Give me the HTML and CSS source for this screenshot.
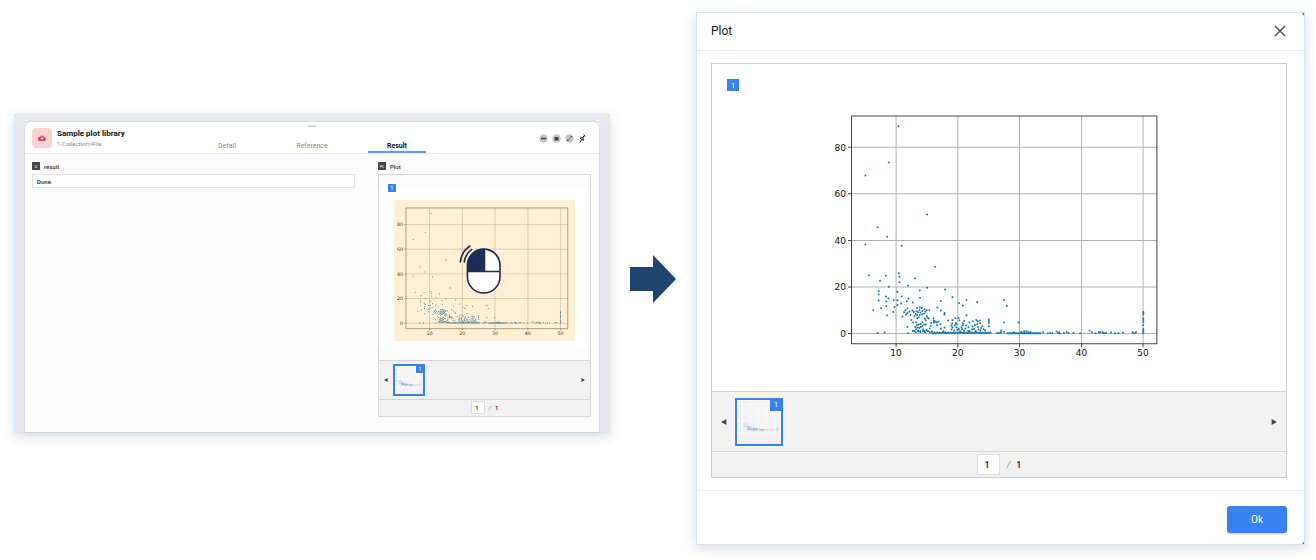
FILE: index.html
```
<!DOCTYPE html>
<html lang="en">
<head>
<meta charset="utf-8">
<meta name="viewport" content="width=device-width, initial-scale=1">
<title>Sample plot library</title>
<link rel="stylesheet" href="styles.css">
</head>
<body>
<main class="scene">
  <section class="app">
    <div class="panel">
      <header class="panel-head">
        <span class="handle"></span>
        <div class="brand">
          <span class="logo">
            <svg viewBox="0 0 24 18"><path fill="#e2464f" d="M19 7a7.500 7.500 0 0 0-14-1A6 6 0 0 0 6 18h12.500A5.500 5.500 0 0 0 19 7z"/><path fill="#f9d0d1" d="M12 15l-5-6h3V5h4v4h3z"/></svg>
          </span>
          <div><h1>Sample plot library</h1><p>1-Collection&gt;File</p></div>
        </div>
        <nav class="tabs">
          <a href="#detail">Detail</a><a href="#reference">Reference</a><a href="#result" class="active" aria-current="page">Result</a>
        </nav>
        <div class="actions">
          <button aria-label="Minimize"><svg viewBox="0 0 18 18"><circle cx="9" cy="9" r="8.500" fill="#c4c4c4"/><path d="M4 9h10" stroke="#444" stroke-width="3"/></svg></button>
          <button aria-label="Restore"><svg viewBox="0 0 18 18"><circle cx="9" cy="9" r="8.500" fill="#c4c4c4"/><path fill="#444" d="M5 6h8v7H5z"/></svg></button>
          <button aria-label="Expand"><svg viewBox="0 0 18 18"><circle cx="9" cy="9" r="8.500" fill="#c4c4c4"/><path d="M10 4h4v4zM4 10v4h4z" fill="#555"/><path d="M5 13l8-8" stroke="#666" stroke-width="1.500"/></svg></button>
          <button aria-label="Pin"><svg viewBox="0 0 18 18"><path fill="none" stroke="#333" stroke-width="2" d="M11 1l4 4M13 3l-3 5 1 5-7-5 5-1 4-4M7.500 10.500L4 17"/></svg></button>
        </div>
      </header>
      <div class="panel-body">
        <div>
          <label class="field" for="result-value"><span class="tag">S</span>result</label>
          <input id="result-value" class="value" value="Done" readonly>
        </div>
        <div>
          <h2 class="field"><span class="tag">PL</span>Plot</h2>
          <div class="viewer small">
            <div class="stage">
              <span class="badge">1</span>
              <div class="canvas">
                <div class="shot">
                  <svg class="plot" viewBox="829 101 342 265" role="img" aria-label="Scatter plot"><use href="#figure"/></svg>
                  <div class="hint">
                    <svg class="mouse" viewBox="270 165 130 152" aria-hidden="true"><rect x="295" y="179" width="99" height="133" rx="49.500" fill="#fff"/><path fill="#1d2e56" d="M347 179v69h-52v-20a50 49 0 0 1 52-49z"/><g fill="none" stroke="#1d2e56" stroke-width="5"><rect x="295.500" y="179.500" width="98.500" height="132.500" rx="49"/><path d="M295 247h99M347 180v67"/><path stroke-linecap="round" d="M274 218q4-32 29-48M286 218q3-24 22-37"/></g></svg>
                  </div>
                </div>
              </div>
            </div>
            <div class="strip">
              <button class="nav" aria-label="Previous"><svg viewBox="0 0 10 10"><path d="M9 0v10L0 5z"/></svg></button>
              <button class="thumb" aria-label="Plot 1"><svg class="plot" viewBox="829 101 342 265"><use href="#figure"/></svg><span class="badge">1</span></button>
              <button class="nav next" aria-label="Next"><svg viewBox="0 0 10 10"><path d="M1 0v10L10 5z"/></svg></button>
            </div>
            <div class="pager"><input aria-label="Page" value="1"><i>/</i><span>1</span></div>
          </div>
        </div>
      </div>
    </div>
  </section>

  <svg class="arrow" viewBox="0 0 46 48" aria-hidden="true"><path fill="#1e456e" d="M0 12h23V0l23 24-23 24V36H0z"/></svg>

  <section class="dialog" role="dialog" aria-labelledby="dialog-title">
    <header class="dialog-head">
      <h2 id="dialog-title">Plot</h2>
      <button class="close" aria-label="Close"><svg viewBox="0 0 12 12"><path d="M1 1l10 10M11 1L1 11" stroke="#555" stroke-width="1.500"/></svg></button>
    </header>
    <div class="dialog-body">
      <div class="viewer">
        <div class="stage">
          <span class="badge">1</span>
          <svg class="plot" viewBox="827 100 344 266" role="img" aria-label="Scatter plot">
            <g id="figure">
              <rect x="829" y="101" width="342" height="265" fill="#fff"/>
              <path class="grid" d="M896 116V344M957.700 116V344M1019.300 116V344M1081.300 116V344M1142.700 116V344M851 147.300H1157M851 193.700H1157M851 240.300H1157M851 286.700H1157M851 333.300H1157"/>
              <path id="points" class="points" transform="translate(825 230) scale(.3333)"/>
              <path class="frame" d="M851.500 116H1156.500V343.500H851.500ZM896 344v3M957.700 344v3M1019.300 344v3M1081.300 344v3M1142.700 344v3M848 147.300h3M848 193.700h3M848 240.300h3M848 286.700h3M848 333.300h3"/>
              <g class="tick" text-anchor="middle">
                <text x="896" y="356">10</text><text x="957.700" y="356">20</text><text x="1019.300" y="356">30</text><text x="1081.300" y="356">40</text><text x="1142.700" y="356">50</text>
              </g>
              <g class="tick" text-anchor="end">
                <text x="846" y="150.500">80</text><text x="846" y="197">60</text><text x="846" y="243.500">40</text><text x="846" y="290">20</text><text x="846" y="336.500">0</text>
              </g>
            </g>
          </svg>
        </div>
        <div class="strip">
          <button class="nav" aria-label="Previous"><svg viewBox="0 0 10 10"><path d="M9 0v10L0 5z"/></svg></button>
          <button class="thumb" aria-label="Plot 1"><svg class="plot" viewBox="829 101 342 265"><use href="#figure"/></svg><span class="badge">1</span></button>
          <button class="nav next" aria-label="Next"><svg viewBox="0 0 10 10"><path d="M1 0v10L10 5z"/></svg></button>
        </div>
        <div class="pager"><input aria-label="Page" value="1"><i>/</i><span>1</span></div>
      </div>
    </div>
    <footer class="dialog-foot"><button class="ok">Ok</button></footer>
  </section>
</main>
<script src="plot.js"></script>
</body>
</html>
```
FILE: plot.js
```
// Scatter samples, as "x,y" pairs in thirds of a figure unit.
const samples = `
220,-311 191,-203 121,-164 306,-47 158,-9 186,20 121,43 230,47 330,110 132,135 182,137 165,152
221,129 223,140 223,156 191,170 249,166 270,145 306,173 284,181 360,178 382,201 285,203 347,212
161,183 161,193 161,211 183,199 190,204 184,214 184,227 168,234 145,240 186,256 217,185 230,199
206,210 217,210 208,230 205,245 217,224 228,220 245,213 250,205 263,217 247,235 402,218 413,226
424,209 456,215 537,209 545,227 424,255 337,232 347,241 358,248 358,253 313,240 232,259 237,246
243,253 247,248 241,240 253,244 256,254 262,241 266,245 268,258 272,251 274,243 276,233 284,232
283,240 290,233 298,237 301,244 305,240 292,242 286,247 279,246 276,255 281,261 284,254 291,252
297,250 305,257 307,262 299,265 302,270 311,265 325,264 326,271 259,269 264,277 276,264 273,276
275,285 281,283 287,281 277,292 270,290 283,293 287,290 292,276 292,287 297,283 302,283 247,290
263,302 268,302 273,297 279,301 285,302 294,297 298,302 304,299 310,303 314,295 317,287 318,278
326,277 330,274 335,276 336,284 340,274 346,282 347,295 355,303 358,292 369,271 382,269 391,264
400,263 403,270 392,278 381,280 379,286 382,292 389,286 394,282 394,292 401,296 409,291 413,279
417,272 413,285 423,286 430,291 429,302 421,295 433,277 443,273 453,269 457,273 464,271 465,279
456,282 458,290 449,284 442,289 447,296 441,297 434,302 460,298 468,293 472,288 475,297 480,300
491,268 491,273 491,278 491,288 379,298 387,301 397,299 405,303 411,296 417,301 452,302 466,301
158,308 179,307 249,309 537,277 580,277 528,301 793,301 800,306 528,306 537,305
954,245 954,250 954,253 954,265 954,270 954,275 954,284 954,296 954,301 954,305 954,309
515,309 519,308 524,309 546,309 566,306 588,305 592,308 597,303 600,308 604,303 610,306 613,309
616,306 625,309 633,308 641,309 654,306 668,309 675,308 682,309 694,304 698,309 702,306 704,310 716,308 724,306 730,308
745,308 765,309 811,309 820,306 825,306 832,306 836,308 842,308 857,306 869,309 880,309 893,307 922,306 927,309 932,306`;

const dots = samples.trim().split(/\s+/).map(pair => pair.split(',').map(Number));

// The samples that lie along zero.
for (let x = 265, i = 0; x < 325; x += 7, i++) dots.push([x, 303 + (i * 3) % 6]);
for (let x = 320, i = 0; x < 497; x += 4, i++) dots.push([x, 307 + (i * 2) % 4]);
for (let x = 546; x < 648; x += 4) dots.push([x, 309]);

document.getElementById('points').setAttribute('d', dots.map(([x, y]) => `M${x} ${y}h.01`).join(''));
```
FILE: styles.css
```
* { box-sizing: border-box; }
body { margin: 0; font-family: Roboto, sans-serif; color: #222; background: #fff; }
h1, h2, p { margin: 0; font-weight: 400; }
button { padding: 0; border: 0; background: none; font-family: inherit; cursor: pointer; }
input { font-family: inherit; color: #222; }
svg { display: block; }

.scene { display: grid; grid-template-columns: 596fr 46px 609fr; align-items: center; gap: 20px; padding: 12px 11px 14px 14px; }
.arrow { width: 46px; height: 48px; }

.grid { stroke: #b0b0b0; stroke-width: 1; fill: none; }
.frame { stroke: #444; stroke-width: 1; fill: none; }
.points { stroke: #1f77b4; stroke-width: 6; stroke-linecap: round; fill: none; }
.tick { font: 9px "DejaVu Sans", sans-serif; fill: #111; }

.app { min-width: 0; margin-bottom: 10px; padding: 7px 10px 0; border: 1px solid #d6e6f5; background: #e8eaf0; box-shadow: 0 3px 12px rgba(0, 0, 0, .15); }
.panel { border-radius: 6px 6px 0 0; background: #fcfcfc; overflow: hidden; box-shadow: 0 0 2px rgba(0, 0, 0, .25); }
.panel-head { position: relative; display: grid; grid-template-columns: 1fr auto 1fr; height: 32px; padding: 0 12px 0 7px; border-bottom: 1px solid #e8e8e8; background: #fff; }
.handle { position: absolute; top: 3px; left: 50%; width: 8px; height: 2px; margin-left: -4px; background: #d4d4d4; }
.brand { display: flex; align-items: center; gap: 5px; }
.logo { display: grid; place-items: center; width: 20px; height: 20px; border-radius: 4px; background: #f9d3d4; }
.logo svg { width: 8px; height: 6px; }
.brand h1 { font-size: 8px; line-height: 11px; font-weight: 700; color: #111; white-space: nowrap; }
.brand p { font-size: 6px; line-height: 9px; color: #888; }
.tabs { display: flex; align-items: flex-end; gap: 27px; padding-left: 5px; }
.tabs a { width: 58px; height: 14px; border-bottom: 2px solid transparent; font-size: 7px; line-height: 14px; text-align: center; text-decoration: none; color: #888; }
.tabs .active { border-color: #5b9af5; font-weight: 700; color: #111; }
.actions { display: flex; justify-content: flex-end; align-items: center; gap: 4px; padding-top: 1px; }
.actions svg { width: 9px; height: 9px; }

.panel-body { display: grid; grid-template-columns: 323fr 213fr; gap: 23px; padding: 8px 8px 15px 7px; }
.field { display: flex; align-items: center; gap: 4px; height: 8px; margin-bottom: 4px; font-size: 6px; font-weight: 500; color: #333; }
.tag { display: grid; place-items: center; width: 8px; height: 8px; background: #484848; color: #ddd; font-size: 4px; }
.value { display: block; width: 100%; height: 14px; padding: 0 4px; border: 1px solid #e4e4e4; background: #fff; font-size: 6px; font-weight: 500; }

.viewer { border: 1px solid #ccc; background: #fff; }
.stage { position: relative; padding: 36px 0 25px; }
.stage .plot { width: 60%; margin: 0 auto; }
.stage .badge { position: absolute; top: 15px; left: 15px; }
.badge { display: grid; place-items: center; width: 12px; height: 12px; background: #3782f0; color: #fff; font-size: 8px; }
.strip { display: flex; align-items: center; height: 60px; padding: 0 9px; border-top: 1px solid #d4d4d4; background: #f2f2f2; }
.nav svg { width: 6px; height: 6px; fill: #444; }
.next { margin-left: auto; }
.thumb { position: relative; width: 48px; height: 48px; margin-left: 8px; border: 2px solid #3782f0; display: flex; align-items: flex-start; }
.thumb .plot { width: 100%; opacity: .45; }
.thumb .badge { position: absolute; top: -1px; right: -1px; }
.pager { display: flex; justify-content: center; align-items: center; height: 26px; border-top: 1px solid #d4d4d4; background: #f2f2f2; font-size: 9px; font-weight: 500; }
.pager input { width: 23px; height: 21px; padding: 0 2px 0 0; border: 1px solid #ddd; background: #fff; font-size: 9px; font-weight: 500; text-align: center; }
.pager i { margin: 0 6px 0 7px; color: #888; font-weight: 400; }

.small { border-color: #d8d8d8; background: #fcfcfc; }
.small .stage { padding: 14px 0 11px; }
.small .canvas { padding: 11px 0 8px; background: #fff; }
.small .shot { position: relative; width: 86%; margin: 0 auto; }
.small .stage .plot { width: 100%; }
.small .stage .badge { top: 9px; left: 9px; z-index: 1; }
.small .badge { width: 8px; height: 8px; font-size: 5px; }
.small .strip { height: 39px; padding: 0 5px; }
.small .nav svg { width: 4px; height: 4px; }
.small .thumb { width: 32px; height: 32px; margin-left: 5px; }
.small .pager { height: 17px; font-size: 6px; }
.small .pager input { width: 14px; height: 13px; padding: 0 1px 0 0; font-size: 6px; }
.small .pager i { margin: 0 4px; }
.hint { position: absolute; inset: 0; background: rgba(255, 170, 32, .19); }
.mouse { position: absolute; left: 36%; top: 31%; width: 43px; height: 51px; }

.dialog { position: relative; min-width: 0; border: 1px solid #d4e6f5; background: #fff; box-shadow: 0 3px 12px rgba(0, 0, 0, .15); }
.dialog::before, .dialog::after { content: ""; position: absolute; right: 0; width: 2px; height: 3px; background: #666; }
.dialog::before { top: 0; clip-path: polygon(0 0, 100% 0, 100% 100%); }
.dialog::after { bottom: 0; clip-path: polygon(100% 0, 100% 100%, 0 100%); }
.dialog-head { display: flex; justify-content: space-between; align-items: center; height: 38px; padding: 0 18px 2px 14px; border-bottom: 1px solid #e5e5e5; }
.dialog-head h2 { font-size: 12px; color: #222; }
.close svg { width: 12px; height: 12px; }
.dialog-body { padding: 12px 17px 12px 14px; }
.dialog-foot { display: flex; justify-content: flex-end; padding: 15px 17px 11px; border-top: 1px solid #eee; }
.ok { width: 60px; height: 27px; border-radius: 3px; background: #3782f0; color: #fff; font-size: 10px; box-shadow: 0 1px 2px rgba(0, 0, 0, .2); }
```
